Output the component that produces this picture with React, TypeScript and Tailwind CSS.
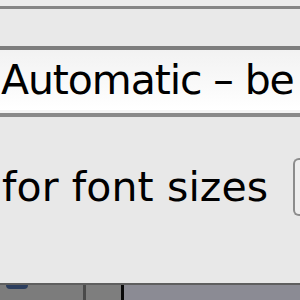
export default function App() {
  return (
    <div
      className="relative flex h-[300px] w-[300px] flex-col overflow-hidden bg-[#e8e8e8]"
      style={{ fontFamily: '"DejaVu Sans", "Liberation Sans", sans-serif' }}
    >
      <div className="h-[6px] bg-[#ebebeb]" />
      <div className="h-[3px] bg-[#858585]" />
      <div className="h-[37px] bg-[#e9e9e9]" />
      <div className="h-[4px] bg-[#7d7d7d]" />
      <div className="flex h-[60px] items-center whitespace-nowrap bg-gradient-to-b from-[#f2f2f2] to-[#ffffff] pl-[1px] text-[41px] leading-none tracking-[-1.1px] text-black">
        Automatic – be
      </div>
      <div className="h-[3px] bg-[#f4f4f4]" />
      <div className="h-[4px] bg-[#8a8a8a]" />
      <div className="flex h-[40px]" />
      <div className="flex h-[60px] items-center">
        <span className="whitespace-nowrap pl-[2px] text-[41px] leading-none tracking-[0.1px] text-black">for font sizes</span>
        <div className="ml-auto h-[58px] w-[7px] rounded-l-[6px] border-y-2 border-l-2 border-[#8c8c8c] bg-[#eeeeee]" />
      </div>
      <div className="h-[66px]" />
      <div className="h-[2px] bg-[#5f5f5f]" />
      <div className="flex flex-1 bg-[#7c7c7c]">
        <div className="w-[83px]">
          <div className="ml-[6px] h-[4px] w-[22px] rounded-b-full bg-[#2c3e5e]" />
        </div>
        <div className="w-[3px] bg-[#4a4a4a]" />
        <div className="w-[35px] bg-[#7e7e7e]" />
        <div className="w-[3px] bg-[#0a0a0a]" />
        <div className="flex-1 bg-[#8b8b94]" />
      </div>
    </div>
  );
}
